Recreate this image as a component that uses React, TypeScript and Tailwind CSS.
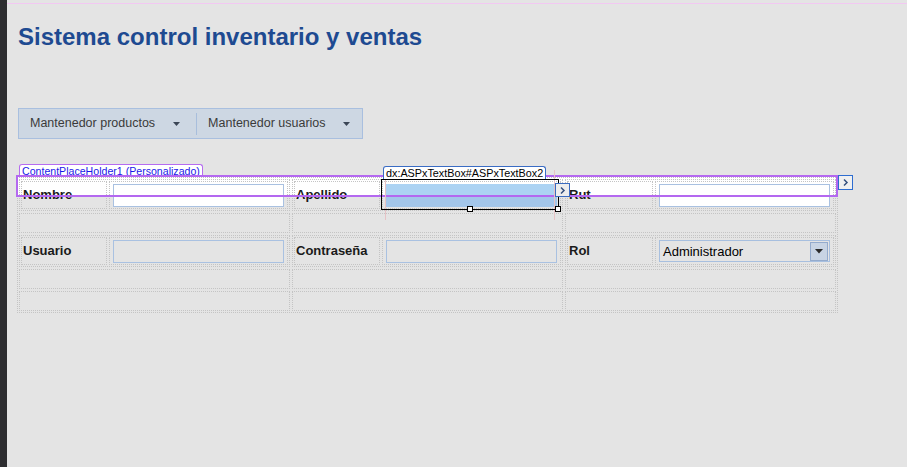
import React from "react";

const DOT = "border border-dotted border-[#c4c4c4]";

function Caret() {
  return (
    <svg width="7" height="4" viewBox="0 0 7 4">
      <path d="M0 0H7L3.5 4Z" fill="#3b4656" />
    </svg>
  );
}

function Chevron() {
  return (
    <svg width="7" height="9" viewBox="0 0 7 9">
      <path d="M2 1.5 L5 4.5 L2 7.5" fill="none" stroke="#34507e" strokeWidth="1.5" />
    </svg>
  );
}

function Field({ label, children }: { label: string; children: React.ReactNode }) {
  return (
    <div className={`w-[271px] ${DOT} p-px`}>
      <div className="flex gap-[2px]">
        <div className={`w-[86px] h-[28px] ${DOT} flex items-center pl-px text-[13px] font-bold text-[#1a1a1a]`}>
          {label}
        </div>
        <div className={`flex-1 h-[28px] ${DOT} flex items-center px-[3px]`}>{children}</div>
      </div>
    </div>
  );
}

function Empty() {
  return <div className={`w-[271px] h-[20px] ${DOT}`} />;
}

function Input({ white }: { white?: boolean }) {
  return (
    <div
      className={`w-full h-[23px] border border-[#a9c1e1] ${white ? "bg-white" : "bg-[#e4e4e4]"}`}
    />
  );
}

export default function App() {
  return (
    <div className="relative w-[907px] h-[467px] overflow-hidden bg-[#e4e4e4] flex font-['Liberation_Sans',Arial,sans-serif]">
      <div className="w-[7px] h-full bg-[#2d2d30]" />
      <div className="flex flex-col">
        <div className="pt-[25px] ml-[11px] leading-[24px] text-[24px] font-bold text-[#1e4a91]">
          Sistema control inventario y ventas
        </div>

        <div className="mt-[59px] ml-[11px] flex items-center h-[31px] w-[345px] border border-[#a9bfdf] bg-[#cdd7e3] text-[12.5px] text-[#3a3a3a]">
          <div className="flex items-center pl-[11px] pr-[16px] gap-[18px]">
            <span>Mantenedor productos</span>
            <Caret />
          </div>
          <div className="w-px h-[22px] bg-[#a8bedc]" />
          <div className="flex items-center pl-[11px] gap-[17px]">
            <span>Mantenedor usuarios</span>
            <Caret />
          </div>
        </div>

        <div className={`relative z-10 mt-[38px] ml-[10px] ${DOT} p-px flex flex-col gap-[2px] w-[821px]`}>
          <div className="flex gap-[2px]">
            <Field label="Nombre">
              <Input white />
            </Field>
            <Field label="Apellido">
              <div className="w-full h-[23px] bg-[linear-gradient(#acd3f3_0_13px,#a3c6ea_13px)]" />
            </Field>
            <Field label="Rut">
              <Input white />
            </Field>
          </div>
          <div className="flex gap-[2px]">
            <Empty />
            <Empty />
            <Empty />
          </div>
          <div className="flex gap-[2px]">
            <Field label="Usuario">
              <Input />
            </Field>
            <Field label="Contraseña">
              <Input />
            </Field>
            <Field label="Rol">
              <div className="w-full h-[22px] border border-[#a7bfdf] flex items-center pl-[3px] pr-px">
                <span className="flex-1 text-[13px] text-black leading-none">Administrador</span>
                <div className="w-[18px] h-[19px] bg-[#c8d4e4] border border-[#94abcd] flex items-center justify-center">
                  <svg width="8" height="5" viewBox="0 0 8 5">
                    <path d="M0 0H8L4 4.5Z" fill="#2b2b2b" />
                  </svg>
                </div>
              </div>
            </Field>
          </div>
          <div className="flex gap-[2px]">
            <Empty />
            <Empty />
            <Empty />
          </div>
          <div className="flex gap-[2px]">
            <Empty />
            <Empty />
            <Empty />
          </div>
        </div>
      </div>

      {/* designer overlays */}
      <div className="absolute left-[7px] right-0 top-[3px] h-px bg-[#f2c8f2]" />
      <div className="absolute z-0 left-[18px] top-[177px] w-[818px] h-[18px] bg-white" />
      <div className="absolute z-20 left-[19px] top-[164px] h-[13px] px-[2px] border border-b-0 border-[#b56cf0] rounded-t-[3px] bg-white text-[10.6px] leading-[12px] text-[#1818e8] whitespace-nowrap">
        ContentPlaceHolder1 (Personalizado)
      </div>
      <div className="absolute z-20 left-[16px] top-[175px] w-[822px] h-[22px] border-2 border-[#b468f0]" />

      <div className="absolute z-20 left-[385px] top-[170px] w-px h-[50px] bg-[#e6c3c6]" />
      <div className="absolute z-20 left-[554px] top-[170px] w-px h-[50px] bg-[#e6c3c6]" />
      <div className="absolute z-20 left-[381px] top-[179px] w-[178px] h-[31px] border border-black" />
      <div className="absolute z-30 left-[383px] top-[166px] h-[13px] px-[2px] border border-b-0 border-[#3a6cc4] rounded-t-[3px] bg-white text-[10.8px] leading-[12px] text-black whitespace-nowrap">
        dx:ASPxTextBox#ASPxTextBox2
      </div>
      <div className="absolute z-30 left-[467px] top-[206px] w-[6px] h-[6px] border border-black bg-white" />
      <div className="absolute z-30 left-[555px] top-[206px] w-[6px] h-[6px] border border-black bg-white" />
      <div className="absolute z-30 left-[555px] top-[183px] w-[15px] h-[14px] border border-[#3c6cc0] bg-[#ededed] flex items-center justify-center">
        <Chevron />
      </div>
      <div className="absolute z-30 left-[838px] top-[175px] w-[15px] h-[15px] border border-[#2e6dd0] bg-[#f0f0f0] flex items-center justify-center">
        <Chevron />
      </div>
    </div>
  );
}
